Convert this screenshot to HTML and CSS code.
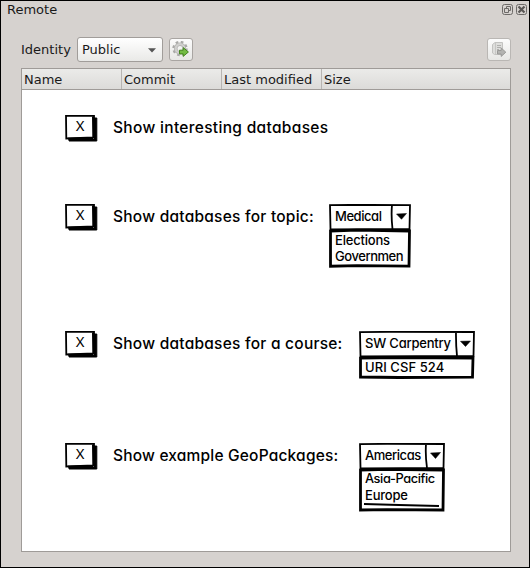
FILE: index.html
```
<!DOCTYPE html>
<html lang="en">
<head>
<meta charset="utf-8">
<title>Remote</title>
<link rel="stylesheet" href="styles.css">
</head>
<body>
<svg class="defs" width="0" height="0" aria-hidden="true">
  <symbol id="key" viewBox="0 0 33 27">
    <path d="M4 24.5H29V3H31.8V26H4Z" fill="#000" stroke="#000"/>
    <path d="M1 .9L29 .7L29.2 22.5L1.3 23.5Z" fill="#fff" stroke="#000" stroke-width="1.8"/>
    <path d="M28 1.5L28.3 22M3 23.8L28 23" stroke="#000" stroke-width="2"/>
  </symbol>
</svg>
<div class="dock">
  <header class="titlebar">
    <span>Remote</span>
    <div class="window-buttons">
      <svg width="11" height="11" viewBox="0 0 11 11"><rect x=".5" y=".5" width="10" height="10" rx="2"/><path d="M4.5 4V2.5H8.5V6.5H7M2.5 4.5H6.5V8.5H2.5Z"/></svg>
      <svg width="11" height="11" viewBox="0 0 11 11"><rect x=".5" y=".5" width="10" height="10" rx="2"/><path class="cross" d="M2.5 2.5L8.5 8.5M8.5 2.5L2.5 8.5"/></svg>
    </div>
  </header>
  <div class="toolbar">
    <label>Identity</label>
    <button class="select"><span>Public</span><svg width="8" height="5" viewBox="0 0 8 5"><path d="M0 .3H8L4 4.6Z" fill="#555"/></svg></button>
    <button class="tool">
      <svg width="18" height="17" viewBox="0 0 18 17">
        <circle cx="8" cy="7.5" r="6.5" fill="none" stroke="#a9a9a7" stroke-width="2.4" stroke-dasharray="2.6 2.505"/>
        <circle cx="8" cy="7.5" r="4.3" fill="none" stroke="#b0b0ae" stroke-width="3.6"/>
        <circle cx="8" cy="7.5" r="4.3" fill="none" stroke="#d0d0ce" stroke-width="2.2"/>
        <path d="M7.5 9.2H11.2V6.6L16.4 11L11.2 15.4V12.9H7.5Z" fill="#73bb43" stroke="#43851e"/>
      </svg>
    </button>
    <button class="tool disabled">
      <svg width="18" height="17" viewBox="0 0 18 17">
        <path d="M2.5 3.5L5 1.5H12.5V13.5H4.5L2.5 12Z" fill="#dededc" stroke="#c3c3c1"/>
        <path d="M5.5 2V13" stroke="#c6c6c4"/>
        <path d="M7 4.5H11M7 6.5H11M7 8.5H9" stroke="#b0b0ae"/>
        <path d="M7.5 9.5H11.2V7L15.8 11.2L11.2 15.4V13H7.5Z" fill="#b3b3b1" stroke="#999997"/>
      </svg>
    </button>
  </div>
  <main class="table">
    <div class="head"><span>Name</span><span>Commit</span><span>Last modified</span><span>Size</span></div>
    <div class="canvas">
      <section class="row">
        <button class="key"><svg width="33" height="27"><use href="#key"/></svg><span>X</span></button>
        <p class="looser">Show interesting databases</p>
      </section>
      <section class="row">
        <button class="key"><svg width="33" height="27"><use href="#key"/></svg><span>X</span></button>
        <p>Show databases for topic:</p>
        <div class="combo topic">
          <svg class="frame" width="82" height="64" viewBox="0 0 82 64">
            <path d="M1 1.2L28 .8L81 1.2L80.5 25L1.5 25.3ZM63 1Q62 12 63.5 25"/>
            <path class="heavy" d="M1.5 27L28 26.2L80.5 27L80 62.2L28 61.7L1.5 62.2Z"/>
            <path class="arrow" d="M67.5 10L77.5 9.5L72.5 15.3Z"/>
          </svg>
          <div class="value tight">Medical</div>
          <div class="option">Elections</div>
          <div class="option tight">Governmen</div>
        </div>
      </section>
      <section class="row">
        <button class="key"><svg width="33" height="27"><use href="#key"/></svg><span>X</span></button>
        <p class="wide">Show databases for a course:</p>
        <div class="combo course">
          <svg class="frame" width="116" height="49" viewBox="0 0 116 49">
            <path d="M1 1.2L30 .8L115 1L114.5 25L1.5 25.3ZM97 1Q96.8 13 98 25"/>
            <path class="heavy" d="M1.5 27.2L40 26.5L114 27L113.5 46.2L40 46.5L1.5 46Z"/>
            <path class="arrow" d="M101.5 10.3L111.5 10L106.5 15.5Z"/>
          </svg>
          <div class="value">SW Carpentry</div>
          <div class="option loose">URI CSF 524</div>
        </div>
      </section>
      <section class="row">
        <button class="key"><svg width="33" height="27"><use href="#key"/></svg><span>X</span></button>
        <p class="wide closer">Show example GeoPackages:</p>
        <div class="combo region">
          <svg class="frame" width="86" height="69" viewBox="0 0 86 69">
            <path d="M1 1.2L28 .8L85 1L84.5 25L1.5 25.3ZM67 1Q66.2 12 68 25"/>
            <path class="heavy" d="M1.5 27L28 26.3L84.5 27L84 67L28 66.6L1.5 67Z"/>
            <path d="M5 61L40 62L80 63"/>
            <path class="arrow" d="M71.5 10L81.5 9.5L76.5 15.5Z"/>
          </svg>
          <div class="value tight">Americas</div>
          <div class="option tighter">Asia-Pacific</div>
          <div class="option">Europe</div>
        </div>
      </section>
    </div>
  </main>
</div>
</body>
</html>
```
FILE: styles.css
```
* { box-sizing: border-box; }
body { margin: 0; font: 13px/18px "DejaVu Sans", sans-serif; color: #1a1a1a; }
button { padding: 0; border: 0; background: none; font: inherit; color: inherit; }
p { margin: 0; }
svg { display: block; flex: none; }
.defs { position: absolute; }
.dock { width: 530px; height: 568px; border: 1px solid #000; background: #d6d2cf; padding: 0 18px 15px 20px; display: flex; flex-direction: column; }
.titlebar { display: flex; justify-content: space-between; height: 36px; margin: 0 -16px 0 -14px; }
.window-buttons { display: flex; gap: 3px; padding-top: 3px; }
.window-buttons svg { fill: none; stroke: #6d6a68; }
.window-buttons .cross { stroke-width: 2.2; stroke: #5a5755; }
.toolbar { display: flex; align-items: center; height: 25px; margin-bottom: 6px; }
.toolbar label { width: 56px; }
.select { width: 86px; height: 25px; border: 1px solid #a19d9a; border-radius: 3px; background: linear-gradient(#fff, #e9e9e7); display: flex; align-items: center; justify-content: space-between; padding: 0 6px 0 4px; margin-right: 6px; }
.select svg { margin-top: 2px; }
.tool { width: 24px; height: 23px; border: 1px solid #a9a5a2; border-radius: 3px; background: linear-gradient(#fcfcfc, #e7e7e5); display: grid; place-items: center; }
.tool.disabled { margin-left: auto; border-color: #bab7b4; }
.table { flex: 1; border: 1px solid #9f9b98; background: #fff; }
.head { display: grid; grid-template-columns: 100px 100px 100px 1fr; height: 21px; border-bottom: 1px solid #9f9b98; background: linear-gradient(#ebebe9, #dcdbd9); line-height: 21px; }
.head span { padding-left: 2px; border-right: 1px solid #b8b5b2; white-space: nowrap; height: 20px; }
.head span:last-child { border: 0; }
.canvas { display: grid; grid-template-rows: 89px 127px 112px 80px; padding: 25px 0 0 43px; font-family: Inter, sans-serif; font-feature-settings: "cv11"; color: #000; }
.row { display: flex; align-items: flex-start; white-space: nowrap; }
.key { display: grid; width: 48px; flex: none; }
.key svg, .key span { grid-area: 1 / 1; }
.key span { width: 30px; text-align: center; font-size: 13.5px; line-height: 23px; }
.row p { font-size: 15.5px; line-height: 25px; font-weight: 500; letter-spacing: .24px; width: 216px; }
.row .looser { letter-spacing: .32px; }
.row .closer { letter-spacing: .19px; }
.row .wide { width: 246px; }
.combo { display: grid; align-content: start; font-size: 13px; line-height: 16px; font-weight: 450; letter-spacing: -.2px; }
.frame { fill: none; stroke: #000; stroke-width: 1.8; }
.heavy { stroke-width: 2.8; }
.arrow { fill: #000; stroke-width: .5; }
.value, .option { grid-column: 1; padding-left: 6px; }
.value { grid-row: 1; line-height: 24px; }
.value + .option { grid-row: 2; }
.option + .option { grid-row: 3; }
.tight { letter-spacing: -.45px; }
.tighter { letter-spacing: -.4px; font-size: 12.8px; }
.loose { letter-spacing: .08px; }
.topic { grid-template-rows: 28px 16px 20px; }
.topic .frame, .region .frame { grid-area: 1 / 1 / 4 / 2; }
.course { grid-template-rows: 28px 21px; }
.course .frame { grid-area: 1 / 1 / 3 / 2; }
.region { grid-template-rows: 28px 16px 25px; }
```
